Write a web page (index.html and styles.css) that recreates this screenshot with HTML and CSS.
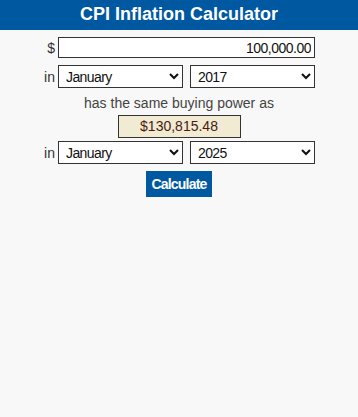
FILE: index.html
```html
<!DOCTYPE html>
<html lang="en">
<head>
    <meta charset="UTF-8">
    <meta name="viewport" content="width=device-width, initial-scale=1.0">
    <title>CPI Inflation Calculator</title>
    <link rel="stylesheet" href="styles.css">
</head>
<body>
    <div class="header">CPI Inflation Calculator</div>

    <form class="calc" id="calc-form">
        <div class="calc-row">
            <span class="calc-label">$</span>
            <input type="text" class="amount" id="amount" value="100,000.00">
        </div>
        <div class="calc-row">
            <span class="calc-label">in</span>
            <div class="pair">
                <select id="month1">
                    <option selected>January</option>
                    <option>February</option>
                    <option>March</option>
                </select>
                <select id="year1">
                    <option selected>2017</option>
                    <option>2018</option>
                </select>
            </div>
        </div>
        <div class="same-text">has the same buying power as</div>
        <div class="result-wrap">
            <div class="result" id="result">$130,815.48</div>
        </div>
        <div class="calc-row">
            <span class="calc-label">in</span>
            <div class="pair">
                <select id="month2">
                    <option selected>January</option>
                    <option>February</option>
                </select>
                <select id="year2">
                    <option selected>2025</option>
                    <option>2024</option>
                </select>
            </div>
        </div>
        <div class="btn-wrap">
            <button type="button" class="btn-calc">Calculate</button>
        </div>
    </form>
</body>
</html>
```

FILE: styles.css
```css
* { margin: 0; padding: 0; box-sizing: border-box; }
body {
    font-family: 'Liberation Sans', Arial, sans-serif;
    background-color: #f8f8f8;
    color: #333;
}
.header {
    background-color: #0059a0;
    color: #fff;
    font-weight: bold;
    font-size: 18px;
    height: 30px;
    line-height: 29px;
    text-align: center;
}
.calc {
    width: 272px;
    margin: 7px auto 0;
    display: flex;
    flex-direction: column;
}
.calc-row {
    display: flex;
    align-items: center;
    gap: 3px;
    margin-bottom: 7px;
}
.calc-row:nth-of-type(3) { margin-bottom: 0; }
.calc-label {
    width: 12px;
    text-align: right;
    font-size: 14px;
    color: #333;
}
.amount {
    width: 257px;
    height: 21px;
    border: 1px solid #333;
    background: #fff;
    font-family: inherit;
    font-size: 14px;
    letter-spacing: -0.5px;
    color: #111;
    text-align: right;
    padding: 0 3px;
}
.pair { display: flex; gap: 7px; }
.pair select {
    width: 125px;
    height: 23px;
    border: 1px solid #333;
    border-radius: 0;
    background-color: #fff;
    font-family: inherit;
    font-size: 14px;
    letter-spacing: -0.6px;
    color: #111;
    padding-left: 3px;
}
.same-text {
    width: 358px;
    margin-left: -43px;
    text-align: center;
    font-size: 14px;
    line-height: 16px;
    color: #444;
}
.result-wrap {
    width: 358px;
    margin: 4px 0 3px -43px;
    display: flex;
    justify-content: center;
}
.result {
    width: 123px;
    height: 23px;
    line-height: 21px;
    background-color: #f1ebd3;
    border: 1px solid #333;
    color: #4a1a10;
    font-size: 14px;
    text-align: center;
}
.btn-wrap {
    width: 358px;
    margin-left: -43px;
    display: flex;
    justify-content: center;
}
.btn-calc {
    width: 66px;
    height: 26px;
    background-color: #0059a0;
    color: #fff;
    border: none;
    font-family: inherit;
    font-weight: bold;
    font-size: 14px;
    letter-spacing: -0.8px;
    cursor: pointer;
}
```
